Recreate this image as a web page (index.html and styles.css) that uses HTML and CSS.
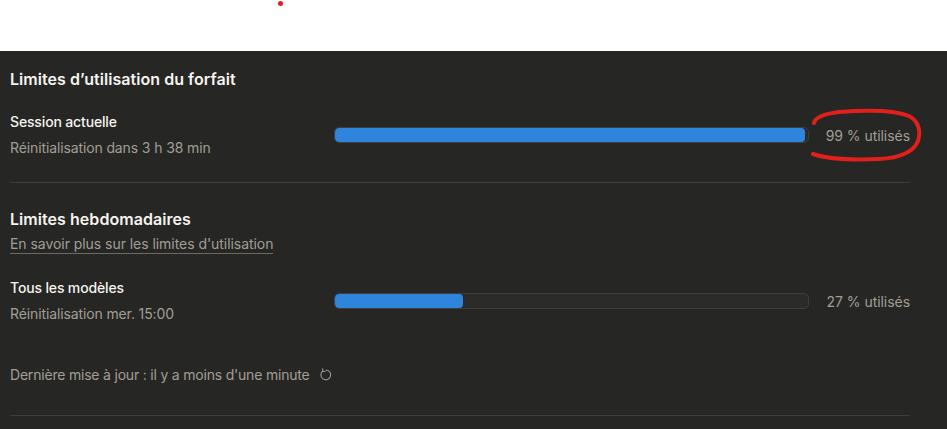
FILE: index.html
```html
<!DOCTYPE html>
<html lang="fr">
<head>
<meta charset="utf-8">
<title>Limites d'utilisation</title>
<link rel="stylesheet" href="styles.css">
</head>
<body>
<div class="top">
  <span class="dot"></span>
</div>
<main class="panel">
  <h2 class="title">Limites d’utilisation du forfait</h2>
  <div class="row row-first">
    <div class="info">
      <div class="label">Session actuelle</div>
      <div class="sub">Réinitialisation dans 3 h 38 min</div>
    </div>
    <div class="bar"><div class="fill" style="width:99.4%"></div></div>
    <div class="pct">99 % utilisés
      <svg class="circle" viewBox="0 0 116 58" width="116" height="58" aria-hidden="true">
        <path d="M5 15 C 6 10, 14 6, 30 4 C 55 2, 85 2, 100 8 C 110 13, 112 24, 109 33 C 104 45, 90 50, 70 51 C 45 52, 18 51, 4 46" fill="none" stroke="#e11f1b" stroke-width="4" stroke-linecap="round"/>
      </svg>
    </div>
  </div>
  <hr class="divider">
  <h2 class="title title-2">Limites hebdomadaires</h2>
  <a class="link" href="#">En savoir plus sur les limites d'utilisation</a>
  <div class="row row-second">
    <div class="info">
      <div class="label">Tous les modèles</div>
      <div class="sub">Réinitialisation mer. 15:00</div>
    </div>
    <div class="bar"><div class="fill" style="width:27%"></div></div>
    <div class="pct">27 % utilisés</div>
  </div>
  <div class="updated">
    <span>Dernière mise à jour : il y a moins d'une minute</span>
    <svg class="refresh" viewBox="0 0 16 16" width="14" height="14" aria-hidden="true">
      <path d="M4.3 3.4 A5.6 5.6 0 1 0 8 2.2" fill="none" stroke="#a19e96" stroke-width="1.2" stroke-linecap="round"/>
      <path d="M4.2 0.9 L4.3 3.6 L7 3.9" fill="none" stroke="#a19e96" stroke-width="1.2" stroke-linecap="round" stroke-linejoin="round"/>
    </svg>
  </div>
  <hr class="divider divider-bottom">
</main>
</body>
</html>
```

FILE: styles.css
```css
html, body {
  margin: 0;
  padding: 0;
  background: #ffffff;
}
body {
  font-family: "Inter", "Noto Sans", sans-serif;
  width: 947px;
  height: 429px;
  overflow: hidden;
}
.top {
  height: 51px;
  position: relative;
  background: #ffffff;
}
.dot {
  position: absolute;
  left: 278px;
  top: 1px;
  width: 5px;
  height: 5px;
  border-radius: 50%;
  background: #d9231f;
}
.panel {
  background: #262624;
  height: 378px;
  padding: 18px 37px 0 10px;
  box-sizing: border-box;
  color: #f5f4ef;
}
.title {
  margin: 0;
  font-size: 16px;
  font-weight: 600;
  line-height: 20px;
  letter-spacing: 0.05px;
}
.row {
  display: flex;
  align-items: center;
}
.row-first {
  margin-top: 23px;
}
.info {
  width: 324px;
  display: flex;
  flex-direction: column;
  gap: 6px;
}
.label {
  font-size: 14px;
  font-weight: 500;
  line-height: 20px;
  letter-spacing: -0.15px;
}
.sub {
  font-size: 14px;
  line-height: 20px;
  color: #a19e96;
  letter-spacing: -0.12px;
}
.bar {
  width: 475px;
  height: 16px;
  box-sizing: border-box;
  border: 1px solid #3e3e3b;
  border-radius: 5px;
  background: #2b2b29;
  overflow: hidden;
}
.fill {
  height: 100%;
  background: #2f84db;
  border-radius: 4px;
}
.pct {
  margin-left: auto;
  font-size: 14px;
  line-height: 17px;
  color: #a19e96;
  letter-spacing: -0.05px;
  position: relative;
}
.circle {
  position: absolute;
  left: -17px;
  top: -19px;
}
.divider {
  border: 0;
  border-top: 1px solid #3d3d3a;
  margin: 24px 0 0 0;
}
.title-2 {
  margin-top: 26px;
}
.link {
  display: inline-block;
  margin-top: 6px;
  font-size: 14px;
  line-height: 18px;
  color: #a19e96;
  text-decoration: none;
  border-bottom: 1px solid #6b6a65;
  letter-spacing: -0.05px;
}
.row-second {
  margin-top: 24px;
}
.updated {
  margin-top: 42px;
  display: flex;
  align-items: center;
  gap: 9px;
  font-size: 14px;
  color: #a19e96;
  letter-spacing: -0.2px;
}
.refresh {
  display: block;
}
.divider-bottom {
  margin-top: 32px;
}
```
